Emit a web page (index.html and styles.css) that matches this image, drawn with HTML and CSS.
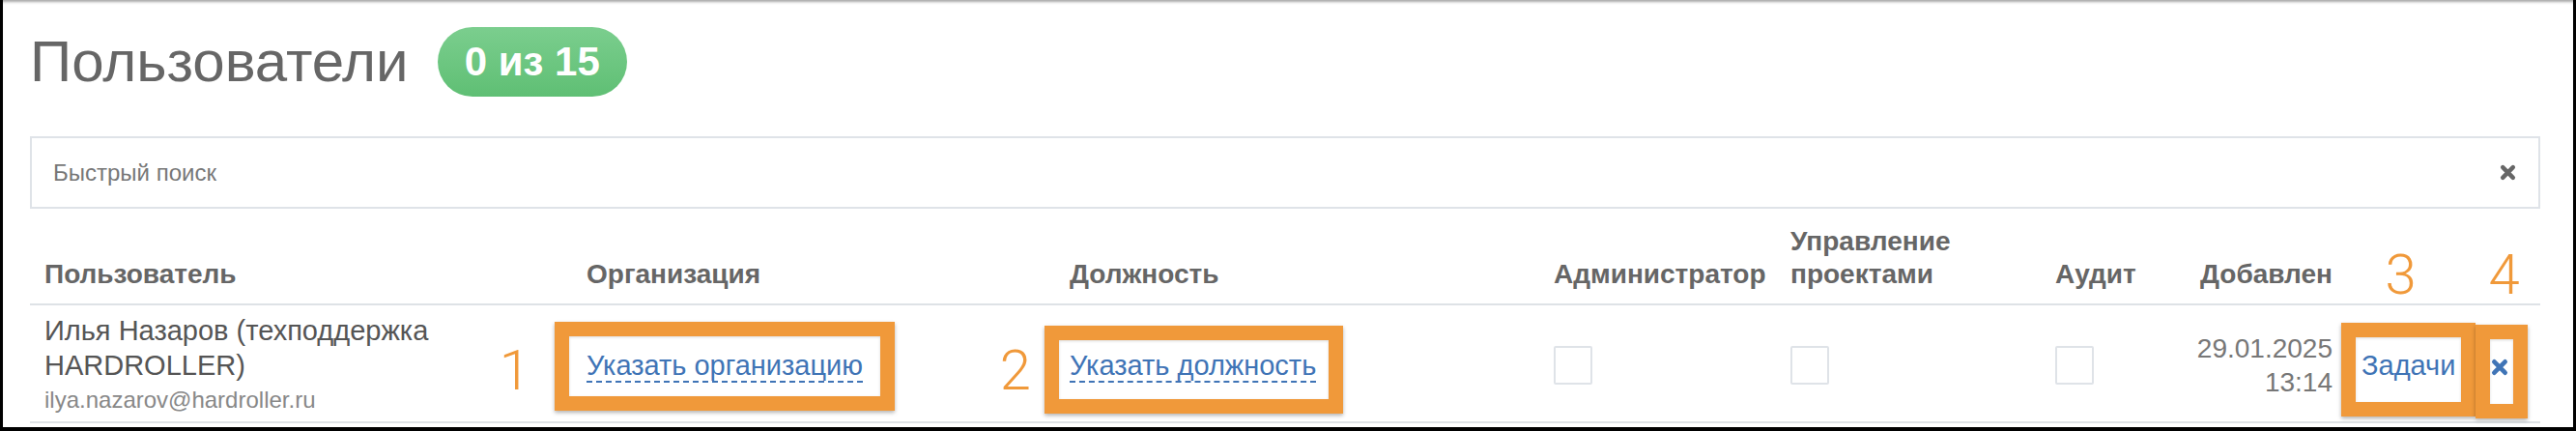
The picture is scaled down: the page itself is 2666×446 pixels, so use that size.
FILE: index.html
```html
<!DOCTYPE html>
<html lang="ru">
<head>
    <meta charset="UTF-8">
    <meta name="viewport" content="width=device-width, initial-scale=1.0">
    <link rel="stylesheet" href="styles.css">
</head>
<body>
<div class="frame">
    <div class="page">
        <div class="page-head">
            <h1 class="page-title">Пользователи</h1>
            <span class="counter">0 из 15</span>
        </div>

        <div class="search">
            <input class="search-input" type="text" placeholder="Быстрый поиск">
            <svg class="icon-clear" viewBox="0 0 16 16" width="17" height="17">
                <path d="M3 3 L13 13 M13 3 L3 13" />
            </svg>
        </div>

        <table class="users">
            <colgroup>
                <col class="c-user">
                <col class="c-org">
                <col class="c-post">
                <col class="c-admin">
                <col class="c-projects">
                <col class="c-audit">
                <col class="c-date">
                <col class="c-tasks">
                <col class="c-del">
            </colgroup>
            <thead>
            <tr>
                <th>Пользователь</th>
                <th>Организация</th>
                <th>Должность</th>
                <th class="nowrap">Администратор</th>
                <th>Управление проектами</th>
                <th>Аудит</th>
                <th class="cell-date">Добавлен</th>
                <th class="note note-tasks">3</th>
                <th class="note note-del">4</th>
            </tr>
            </thead>
            <tbody>
            <tr>
                <td>
                    <div class="user-name">Илья Назаров (техподдержка HARDROLLER)</div>
                    <div class="user-email">ilya.nazarov@hardroller.ru</div>
                </td>
                <td>
                    <span class="mark mark-org"><span class="mark-num num-org">1</span><a class="link-dashed" href="#">Указать организацию</a></span>
                </td>
                <td>
                    <span class="mark mark-post"><span class="mark-num num-post">2</span><a class="link-dashed" href="#">Указать должность</a></span>
                </td>
                <td><span class="checkbox"></span></td>
                <td><span class="checkbox"></span></td>
                <td><span class="checkbox"></span></td>
                <td class="cell-date">29.01.2025 13:14</td>
                <td class="cell-tasks">
                    <span class="mark mark-tasks"><a class="link" href="#">Задачи</a></span>
                </td>
                <td class="cell-del">
                    <span class="mark mark-del">
                        <svg class="icon-del" viewBox="0 0 16 16" width="18" height="18">
                            <path d="M3 3 L13 13 M13 3 L3 13" />
                        </svg>
                    </span>
                </td>
            </tr>
            </tbody>
        </table>
    </div>
</div>
</body>
</html>
```

FILE: styles.css
```css
html, body {
    margin: 0;
    padding: 0;
    background-color: #000;
}

body {
    font-family: "Liberation Sans", Arial, sans-serif;
    color: #555;
}

.frame {
    box-sizing: border-box;
    width: 2666px;
    height: 446px;
    overflow: hidden;
    background-color: #fff;
    border-left: 3px solid #000;
    border-right: 3px solid #000;
    border-bottom: 4px solid #000;
    box-shadow: inset 0 4px 3px -2px rgba(0, 0, 0, 0.35); /* top edge of the capture */
}

.page {
    padding: 28px 34px 0 28px;
}

.page-head {
    display: flex;
    align-items: center;
    gap: 30px;
    height: 72px;
}

.page-title {
    margin: 0;
    font-size: 60px;
    font-weight: normal;
    line-height: 72px;
    color: #666;
}

.counter {
    display: inline-block;
    height: 72px;
    line-height: 72px;
    padding: 0 28px;
    border-radius: 36px;
    background: linear-gradient(#7bce8e, #5fbf74);
    color: #fff;
    font-size: 42px;
    font-weight: bold;
}

/* Quick search */
.search {
    display: flex;
    align-items: center;
    box-sizing: border-box;
    height: 75px;
    margin-top: 41px;
    padding: 0 23px 0 22px;
    border: 2px solid #dfe3e8;
}

.search-input {
    flex: 1;
    border: none;
    outline: none;
    padding: 0;
    font-family: inherit;
    font-size: 24px;
    color: #555;
    background: transparent;
}

.search-input::placeholder {
    color: #777;
}

.icon-clear path,
.icon-del path {
    fill: none;
    stroke-width: 4.2;
    stroke-linecap: round;
}

.icon-clear path {
    stroke: #666;
}

.icon-del path {
    stroke: #3f74b6;
}

/* Users table */
.users {
    width: 2598px;
    table-layout: fixed;
    border-collapse: collapse;
    font-size: 29px;
    line-height: 36px;
}

.c-user { width: 561px; }
.c-org { width: 500px; }
.c-post { width: 501px; }
.c-admin { width: 245px; }
.c-projects { width: 274px; }
.c-audit { width: 150px; }
.c-date { width: 167px; }
.c-tasks { width: 125px; }
.c-del { width: 75px; }

.users th {
    padding: 17px 15px 13px;
    vertical-align: bottom;
    text-align: left;
    font-size: 28px;
    font-weight: bold;
    line-height: 34px;
    color: #666;
    border-bottom: 2px solid #dee2e6;
}

.users td {
    height: 108px;
    padding: 8px 15px 4px;
    vertical-align: middle;
    border-bottom: 2px solid #dee2e6;
}

.users .nowrap {
    white-space: nowrap;
}

.users .cell-date {
    text-align: right;
    padding-left: 5px;
}

td.cell-date {
    font-size: 28px;
    color: #777;
    line-height: 35px;
}

.users .note {
    font-family: Roboto, "Liberation Sans", sans-serif;
    font-size: 58px;
    font-weight: 300;
    line-height: 34px;
    color: #f0993a;
    text-align: center;
}

.note-tasks {
    padding-right: 29px !important;
}

.note-del,
.users .cell-del {
    padding-left: 6px;
    padding-right: 15px;
    text-align: center;
}

.user-name {
    line-height: 36px;
    color: #555;
}

.user-email {
    font-size: 24px;
    line-height: 36px;
    color: #888;
}

a {
    color: #3f74b6;
    text-decoration: none;
}

.link-dashed {
    border-bottom: 2px dashed #3f74b6;
}

.checkbox {
    display: inline-block;
    box-sizing: border-box;
    width: 40px;
    height: 40px;
    vertical-align: middle;
    border: 2px solid #dfe3e8;
    border-radius: 2px;
    background-color: #fff;
}

/* Orange annotation frames drawn over the row */
.mark {
    position: relative;
    display: inline-block;
}

.mark::after {
    content: "";
    position: absolute;
    border: 15px solid #f0993a;
    box-shadow: 0 2px 4px rgba(0, 0, 0, 0.3), inset 0 1px 3px rgba(0, 0, 0, 0.15);
    pointer-events: none;
}

.mark-org::after {
    top: -27px;
    bottom: -29px;
    left: -33px;
    right: -33px;
}

.mark-post::after {
    top: -23px;
    bottom: -32px;
    left: -26px;
    right: -28px;
}

.mark-tasks::after {
    top: -26px;
    bottom: -35px;
    left: -21px;
    right: -21px;
}

.mark-del {
    vertical-align: middle;
}

.mark-del svg {
    display: block;
}

.mark-del::after {
    top: -35px;
    bottom: -44px;
    left: -16px;
    right: -20px;
}

.mark-num {
    position: absolute;
    top: -6px;
    font-family: Roboto, "Liberation Sans", sans-serif;
    font-size: 58px;
    font-weight: 300;
    line-height: 58px;
    color: #f0993a;
}

.num-org {
    right: calc(100% + 58px);
}

.num-post {
    right: calc(100% + 40px);
}
```
